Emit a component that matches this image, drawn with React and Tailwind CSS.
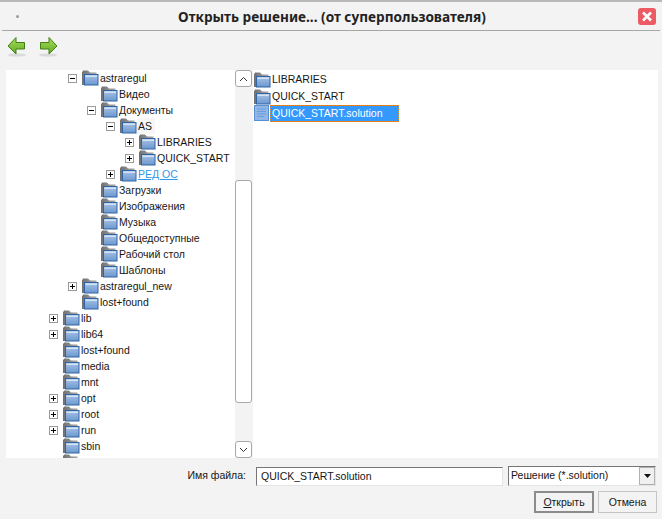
import React from "react";

const tree = [
  { name: "astraregul", level: 2, exp: "-" },
  { name: "Видео", level: 3 },
  { name: "Документы", level: 3, exp: "-" },
  { name: "AS", level: 4, exp: "-", current: true },
  { name: "LIBRARIES", level: 5, exp: "+" },
  { name: "QUICK_START", level: 5, exp: "+" },
  { name: "РЕД ОС", level: 4, exp: "+", link: true },
  { name: "Загрузки", level: 3 },
  { name: "Изображения", level: 3 },
  { name: "Музыка", level: 3 },
  { name: "Общедоступные", level: 3 },
  { name: "Рабочий стол", level: 3 },
  { name: "Шаблоны", level: 3 },
  { name: "astraregul_new", level: 2, exp: "+" },
  { name: "lost+found", level: 2 },
  { name: "lib", level: 1, exp: "+" },
  { name: "lib64", level: 1, exp: "+" },
  { name: "lost+found", level: 1 },
  { name: "media", level: 1 },
  { name: "mnt", level: 1 },
  { name: "opt", level: 1, exp: "+" },
  { name: "root", level: 1, exp: "+" },
  { name: "run", level: 1, exp: "+" },
  { name: "sbin", level: 1 },
  { name: "", level: 1 },
];

const Folder = () => (
  <svg width="17" height="16" viewBox="0 0 17 16" className="shrink-0">
    <defs>
      <linearGradient id="fblue" x1="0" y1="0" x2="0" y2="1">
        <stop offset="0" stopColor="#a9c4e6" />
        <stop offset="1" stopColor="#6b97cf" />
      </linearGradient>
      <linearGradient id="fgray" x1="0" y1="0" x2="1" y2="0">
        <stop offset="0" stopColor="#6f6f6f" />
        <stop offset="1" stopColor="#a8a8a8" />
      </linearGradient>
    </defs>
    <path d="M0 2.5 L1 0.5 H6 L8 2.5 H14.5 V5 H3 V15 H0 Z" fill="url(#fgray)" />
    <rect x="2.5" y="4.5" width="13.5" height="10.5" fill="url(#fblue)" stroke="#2f64a5" />
    <rect x="3.5" y="5.5" width="11.5" height="1.5" fill="#d5e2f2" />
  </svg>
);

const FileIcon = () => (
  <svg width="16" height="17" viewBox="0 0 16 17" className="shrink-0">
    <rect x="0.5" y="0.5" width="14" height="15" fill="#8fb6e6" stroke="#5c8fd0" />
    <path d="M3 4H12M3 6.5H12M3 9H12M3 11.5H10" stroke="#6f9bd6" strokeWidth="1" />
  </svg>
);

const Expander = ({ type }) => (
  <span className="w-[9px] h-[9px] border border-[#9a9a9a] bg-white relative shrink-0">
    <span className="absolute left-[1px] top-[3px] w-[5px] h-px bg-black" />
    {type === "+" && <span className="absolute left-[3px] top-[1px] w-px h-[5px] bg-black" />}
  </span>
);

const Arrow = ({ flip }) => (
  <svg width="20" height="20" viewBox="0 0 20 20" className={flip ? "-scale-x-100" : ""}>
    <defs>
      <linearGradient id="agreen" x1="0" y1="0" x2="0" y2="1">
        <stop offset="0" stopColor="#a6dd5c" />
        <stop offset="1" stopColor="#62aa22" />
      </linearGradient>
    </defs>
    <ellipse cx="10" cy="18" rx="9" ry="1.6" fill="#dadada" />
    <path d="M1 9 L9 0.5 V5.5 H17.5 V12 H9 V17 Z" fill="url(#agreen)" stroke="#437f12" strokeLinejoin="round" />
  </svg>
);

const TreeRow = ({ item }) => (
  <div
    className="h-4 flex items-center relative whitespace-nowrap"
    style={{ paddingLeft: 38 + item.level * 19 }}
  >
    {item.exp && (
      <span className="absolute flex" style={{ left: 24 + item.level * 19 }}>
        <Expander type={item.exp} />
      </span>
    )}
    <Folder />
    <span
      className={
        "px-px h-4 leading-[16px] " +
        (item.link ? "text-[#2f96e8] underline " : "") +
        (item.current ? "bg-[#f6f6f6] pr-[3px]" : "")
      }
    >
      {item.name}
    </span>
  </div>
);

const ScrollButton = ({ up }) => (
  <div className="h-[17px] w-[17px] bg-white border border-[#a8a8a8] rounded-[3px] flex items-center justify-center">
    <svg width="9" height="6" viewBox="0 0 9 6">
      <path d={up ? "M1 5 L4.5 1.5 L8 5" : "M1 1 L4.5 4.5 L8 1"} fill="none" stroke="#333" />
    </svg>
  </div>
);

export default function App() {
  return (
    <div className="w-[664px] h-[519px] bg-white overflow-hidden text-[10.5px] text-[#161616] font-['Liberation_Sans','Noto_Sans',sans-serif]">
      <div className="w-[662px] h-[519px] bg-[#f3f3f3] border-t-2 border-[#b8b8b8] flex flex-col">
        <div className="h-[28px] mx-[2px] flex items-center relative border-b border-[#a6a6a6] box-content">
          <span className="absolute left-[14px] top-[13px] w-[3px] h-[3px] rounded-full bg-[#9a9a9a]" />
          <h1 className="w-full text-center pl-[2px] mt-[2px] font-['Noto_Sans',sans-serif] font-bold text-[13.6px] text-[#222]">
            Открыть решение... (от суперпользователя)
          </h1>
          <button className="absolute left-[636px] top-[6px] w-[18px] h-[17px] rounded-[3px] bg-[#ec5b64] flex items-center justify-center">
            <svg width="12" height="11" viewBox="0 0 12 11">
              <path d="M2 1.5 L10 9.5 M10 1.5 L2 9.5" stroke="#fff" strokeWidth="2.6" />
            </svg>
          </button>
        </div>

        <div className="h-[39px] pl-[7px] pt-[6px] flex gap-[11px] items-start">
          <Arrow />
          <Arrow flip />
        </div>

        <div className="h-[388px] ml-[6px] w-[652px] bg-white flex overflow-hidden">
          <div className="w-[229px] h-full overflow-hidden">
            {tree.map((item, i) => (
              <TreeRow key={i} item={item} />
            ))}
          </div>
          <div className="w-[18px] h-full bg-[#f3f3f3] flex flex-col">
            <ScrollButton up />
            <div className="mt-[93px] h-[223px] w-[17px] bg-white border border-[#a8a8a8] rounded-[3px]" />
            <div className="mt-auto">
              <ScrollButton />
            </div>
          </div>
          <div className="flex-1 pt-px">
            <div className="h-[17px] flex items-center pl-px">
              <Folder />
              <span className="px-px">LIBRARIES</span>
            </div>
            <div className="h-[17px] flex items-center pl-px">
              <Folder />
              <span className="px-px">QUICK_START</span>
            </div>
            <div className="h-[17px] flex items-center pl-px">
              <FileIcon />
              <span className="w-[129px] h-[17px] leading-[15px] pl-px bg-[#3399ff] text-white border border-dotted border-[#f08a1d]">
                QUICK_START.solution
              </span>
            </div>
          </div>
        </div>

        <div className="flex-1 relative">
          <div className="flex items-center pt-[8px]">
            <span className="w-[246px] text-right">Имя файла:</span>
            <input
              readOnly
              value="QUICK_START.solution"
              className="ml-[10px] w-[247px] h-[19px] bg-white pl-[4px] border border-t-[#767676] border-l-[#767676] border-r-[#e4e4e4] border-b-[#e4e4e4] outline-none"
            />
            <div className="ml-[5px] w-[148px] h-[20px] bg-white border border-t-[#767676] border-l-[#767676] border-r-[#e4e4e4] border-b-[#e4e4e4] flex items-center pl-[2px]">
              <span className="flex-1">Решение (*.solution)</span>
              <span className="w-[16px] h-[18px] bg-[#f0f0f0] border border-[#b0b0b0] flex items-center justify-center">
                <svg width="7" height="4" viewBox="0 0 7 4">
                  <path d="M0 0H7L3.5 4Z" fill="#111" />
                </svg>
              </span>
            </div>
          </div>
          <div className="flex justify-end gap-[4px] pr-[5px] mt-[5px]">
            <button className="w-[60px] h-[22px] bg-[#f3f3f3] border-2 border-[#8c8c8c] leading-none">
              <span className="underline">О</span>ткрыть
            </button>
            <button className="w-[59px] h-[22px] bg-[#f3f3f3] border border-[#c4c4c4] leading-none">
              Отмена
            </button>
          </div>
        </div>
      </div>
    </div>
  );
}
